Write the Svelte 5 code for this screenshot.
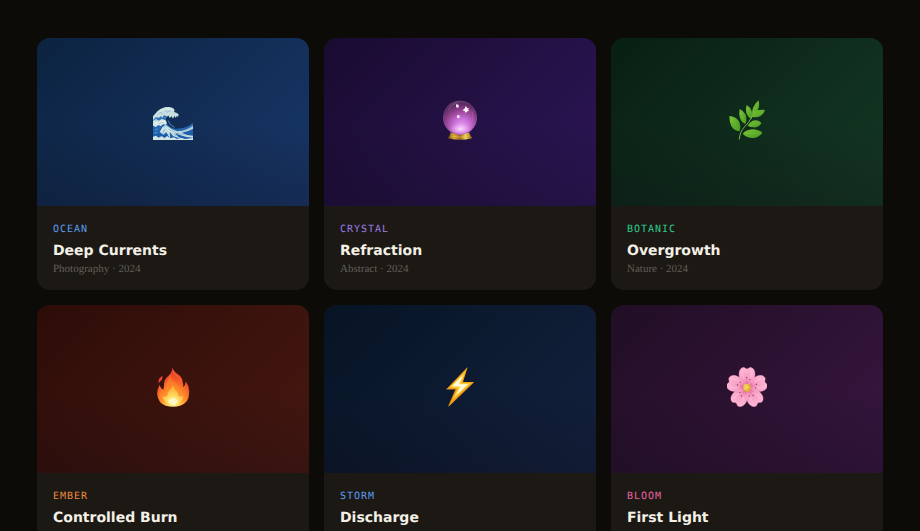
<script lang="ts">
	type Card = {
		id: string;
		category: string;
		title: string;
		meta?: string;
	};

	const cards: Card[] = [
		{ id: 'ocean', category: 'Ocean', title: 'Deep Currents', meta: 'Photography · 2024' },
		{ id: 'crystal', category: 'Crystal', title: 'Refraction', meta: 'Abstract · 2024' },
		{ id: 'botanic', category: 'Botanic', title: 'Overgrowth', meta: 'Nature · 2024' },
		{ id: 'ember', category: 'Ember', title: 'Controlled Burn' },
		{ id: 'storm', category: 'Storm', title: 'Discharge' },
		{ id: 'bloom', category: 'Bloom', title: 'First Light' }
	];

	const petals = [0, 72, 144, 216, 288];
</script>

{#snippet ocean()}
	<defs>
		<linearGradient id="sea" x1="0" y1="0" x2="0" y2="1">
			<stop offset="0" stop-color="#3f7fb8" />
			<stop offset="1" stop-color="#1556ab" />
		</linearGradient>
	</defs>
	<path fill="url(#sea)" d="M0 48 Q14 36 30 30 L48 46 Q36 54 39 66 Q46 82 66 86 Q98 88 120 69 V121 H0Z" />
	<path
		fill="#c6dedf"
		d="M0 49 L8 40 L13 34 L22 27 L29 24 L38 21 L50 21 L60 24 L65 30 L63 36 L70 38 L77 43 L75 51 L71 47 L69 54 L64 48 L60 56 L56 49 L50 54 L47 47 L40 49 L33 45 L28 53 L24 48 L18 53 L9 52 L0 60Z"
	/>
	<path
		fill="#d5e8e6"
		d="M0 63 L9 57 L18 62 L26 57 L38 61 L42 69 L37 75 L31 72 L24 78 L16 75 L9 81 L0 77Z"
	/>
	<path
		fill="#c4dde0"
		d="M20 96 L28 82 L38 74 L44 79 L57 88 L73 94 Q101 91 120 77 V86 Q101 96 86 98 L104 105 L120 107 V113 L100 111 L78 104 L64 100 L84 117 L60 108 L50 95 L52 118 L40 97 L31 104Z"
	/>
	<path
		fill="#d5e5e3"
		d="M0 110 L9 107 L17 113 L26 108 L34 114 L43 108 L51 115 L63 112 L72 117 L83 113 L97 117 L120 114 V121 H0Z"
	/>
	<path
		fill="none"
		stroke="#3b77ab"
		stroke-width="1"
		d="M1 69 L10 61 L19 69 L31 66 M11 45 L21 36 L29 42 M34 29 L42 37 L54 31 M37 79 L30 101 M48 87 L68 108 M56 91 L94 113 M69 100 L113 105 M84 94 Q104 90 119 81"
	/>
	<path fill="none" stroke="#f4fbf6" stroke-width="2" d="M7 47 L25 31 L44 26 L57 30 M3 67 L18 67 L33 64 M25 92 L37 83 L49 94 L67 100" />
	<path fill="none" stroke="#75aed1" stroke-width="2" d="M6 90 L15 87 M3 100 L14 97 M45 61 Q50 77 65 82" />
{/snippet}

{#snippet crystal()}
	<defs>
		<radialGradient id="orb" cx="0.55" cy="0.76" r="0.78">
			<stop offset="0" stop-color="#e7a2ed" />
			<stop offset="0.3" stop-color="#c970d8" />
			<stop offset="0.62" stop-color="#93408f" />
			<stop offset="0.85" stop-color="#5d2c60" />
			<stop offset="1" stop-color="#5f4069" />
		</radialGradient>
		<linearGradient id="stand">
			<stop offset="0" stop-color="#765017" />
			<stop offset="0.25" stop-color="#d9a535" />
			<stop offset="0.5" stop-color="#9b681b" />
			<stop offset="0.72" stop-color="#efd354" />
			<stop offset="1" stop-color="#805719" />
		</linearGradient>
		<radialGradient id="orbLight">
			<stop offset="0" stop-color="#ffe3ff" stop-opacity="0.9" />
			<stop offset="1" stop-color="#eaa1f4" stop-opacity="0" />
		</radialGradient>
	</defs>
	<path fill="url(#stand)" d="M31 98 H88 L91 106 L97 115 Q60 124 24 115 L29 106Z" />
	<circle cx="60" cy="53" r="51" fill="url(#orb)" />
	<ellipse cx="61" cy="87" rx="36" ry="19" fill="url(#orbLight)" />
	<circle cx="60" cy="53" r="50" fill="none" stroke="#79508a" stroke-opacity="0.5" stroke-width="2" />
	<path fill="none" stroke="#c282c7" stroke-opacity="0.35" stroke-width="3" d="M24 31 Q33 13 53 7 M96 33 Q103 52 94 73" />
	<path fill="#fff2ff" d="M78 17 L81 25 L87 24 L84 29 L88 33 L82 34 L77 39 L74 33 L67 31 L73 27Z" />
	<path fill="#ffe5ff" d="M48 13 L56 14 L56 23 L48 22Z M51 46 L59 46 L58 55 L51 54Z" />
	<path fill="none" stroke="#e8c35b" stroke-width="2" d="M33 108 Q60 115 87 108" />
{/snippet}

{#snippet botanic()}
	<defs>
		<linearGradient id="leaf" x1="0" y1="0" x2="1" y2="1">
			<stop offset="0" stop-color="#7bc634" />
			<stop offset="1" stop-color="#459822" />
		</linearGradient>
	</defs>
	<g fill="url(#leaf)">
		<path d="M7 48 Q26 50 35 63 Q43 76 38 94 Q20 92 13 78 Q7 66 7 48Z" />
		<path d="M38 27 Q51 33 56 44 Q61 61 55 72 Q43 67 39 54 Q35 41 38 27Z" />
		<path d="M59 15 Q70 21 75 35 Q79 48 73 57 Q62 51 58 39 Q55 27 59 15Z" />
		<path d="M95 1 Q99 17 93 30 Q88 41 78 47 Q73 34 78 23 Q84 9 95 1Z" />
		<path d="M114 30 Q94 27 83 36 Q76 43 75 51 Q91 54 101 48 Q110 42 114 30Z" />
		<path d="M62 77 Q70 63 84 61 Q99 61 103 70 Q95 84 80 82 Q70 82 62 77Z" />
		<path d="M47 101 Q58 89 76 88 Q95 88 106 99 Q94 114 77 114 Q60 114 47 101Z" />
	</g>
	<path
		fill="none"
		stroke="#79b646"
		stroke-width="3"
		stroke-linecap="round"
		d="M37 117 Q38 96 53 80 Q64 69 71 57 Q78 48 80 31"
	/>
	<path
		fill="none"
		stroke="#9ad84c"
		stroke-opacity="0.6"
		stroke-width="1"
		d="M11 53 L36 90 M41 34 L54 67 M60 22 L73 53 M92 8 L80 42 M107 35 L77 50 M99 70 L66 77 M101 100 L52 101"
	/>
{/snippet}

{#snippet ember()}
	<defs>
		<radialGradient id="flame" cx="0.5" cy="0.94" r="0.92">
			<stop offset="0" stop-color="#fff6a0" />
			<stop offset="0.2" stop-color="#ffd34c" />
			<stop offset="0.42" stop-color="#ff8c28" />
			<stop offset="0.7" stop-color="#f45427" />
			<stop offset="1" stop-color="#df3825" />
		</radialGradient>
		<radialGradient id="core" cx="0.5" cy="0.82" r="0.65">
			<stop offset="0" stop-color="#fffde0" />
			<stop offset="0.35" stop-color="#fff37a" />
			<stop offset="1" stop-color="#ffc13a" />
		</radialGradient>
	</defs>
	<path
		fill="url(#flame)"
		d="M58 0 Q61 13 75 22 Q88 31 89 45 Q92 53 90 61 Q99 55 98 43 Q111 60 108 79 Q109 108 81 116 Q62 122 38 116 Q15 107 13 83 Q11 69 20 53 Q22 64 31 68 L33 55 Q32 39 45 28 Q58 17 58 0Z"
	/>
	<path fill="#eb452c" d="M28 26 Q30 37 22 43 L17 49 Q14 39 20 33Z" />
	<path
		fill="#ff8a2c"
		fill-opacity="0.5"
		d="M52 24 Q54 37 65 45 Q76 53 77 65 Q78 75 86 77 Q95 75 98 68 Q99 99 78 110 Q60 119 39 110 Q20 101 20 75 Q31 83 40 76 Q36 62 40 49 Q46 36 52 24Z"
	/>
	<path
		fill="url(#core)"
		fill-opacity="0.75"
		d="M60 53 Q61 65 70 72 Q77 78 76 88 Q85 91 91 86 Q89 105 75 112 Q60 118 44 112 Q31 104 29 88 Q38 93 44 85 Q43 76 50 69 Q58 62 60 53Z"
	/>
	<ellipse cx="60" cy="103" rx="14" ry="11" fill="#fffbd2" fill-opacity="0.75" />
	<path fill="none" stroke="#ff7448" stroke-width="2" d="M59 10 Q61 20 73 27 Q84 33 85 47" />
{/snippet}

{#snippet storm()}
	<path fill="#f5a51c" d="M83 0 L19 67 L47 67 L25 119 L102 45 L69 45Z" />
	<path fill="#ffd64a" d="M76 14 L29 62 L55 62 L39 96 L92 49 L62 49Z" />
	<path fill="#fffbe1" d="M69 24 L36 58 L62 58 L49 84 L84 52 L57 52Z" />
	<path fill="none" stroke="#db850b" stroke-width="2" d="M20 66 L48 66 L26 116 M101 46 L27 117" />
{/snippet}

{#snippet bloom()}
	<defs>
		<radialGradient id="petal" cx="0.5" cy="0.95" r="0.9">
			<stop offset="0" stop-color="#d95b91" />
			<stop offset="0.35" stop-color="#f497c0" />
			<stop offset="1" stop-color="#ffb4d4" />
		</radialGradient>
	</defs>
	{#each petals as angle (angle)}
		<g transform={`rotate(${angle} 60 62)`}>
			<path
				fill="url(#petal)"
				stroke="#f494bd"
				stroke-width="1"
				d="M60 62 Q38 49 36 24 Q35 4 50 1 L60 6 L70 1 Q85 4 84 24 Q82 49 60 62Z"
			/>
			<path fill="none" stroke="#ffc9df" stroke-width="2" d="M48 12 Q45 25 51 34 M72 12 Q75 25 69 34" />
			<path fill="none" stroke="#d5578c" stroke-width="1" d="M60 60 V36 M59 55 L52 42" />
			<circle cx="59" cy="32" r="2" fill="#8c2959" />
			<circle cx="69" cy="38" r="2" fill="#a63a6d" />
		</g>
	{/each}
	<circle cx="60" cy="62" r="12" fill="#e6ac35" />
	<circle cx="58" cy="60" r="8" fill="#f6d665" />
	<path fill="none" stroke="#ad7820" stroke-width="1" d="M51 62 L57 57 M60 54 L64 60 M60 65 L67 66" />
{/snippet}

<main class="gallery">
	{#each cards as card (card.id)}
		<article class="card {card.id}">
			<div class="artwork">
				<svg viewBox="0 0 120 120" aria-hidden="true">
					{#if card.id === 'ocean'}
						{@render ocean()}
					{:else if card.id === 'crystal'}
						{@render crystal()}
					{:else if card.id === 'botanic'}
						{@render botanic()}
					{:else if card.id === 'ember'}
						{@render ember()}
					{:else if card.id === 'storm'}
						{@render storm()}
					{:else}
						{@render bloom()}
					{/if}
				</svg>
			</div>
			<div class="details">
				<p class="category">{card.category}</p>
				<h2>{card.title}</h2>
				{#if card.meta}
					<p class="meta">{card.meta}</p>
				{/if}
			</div>
		</article>
	{/each}
</main>

<style>
	:global(body) {
		margin: 0;
		background: #0c0b07;
	}

	.gallery {
		display: grid;
		grid-template-columns: repeat(3, minmax(0, 1fr));
		gap: 15px;
		padding: 38px 37px;
		text-rendering: geometricPrecision;
	}

	.card {
		overflow: hidden;
		border-radius: 13px;
		background: #1c1914;
	}

	.artwork {
		display: flex;
		align-items: center;
		justify-content: center;
		box-sizing: border-box;
		height: 168px;
		padding-bottom: 4px;
		background:
			linear-gradient(to top, rgba(10, 7, 14, 0.25), transparent 50%),
			linear-gradient(135deg, var(--from), var(--to));
	}

	.artwork svg {
		width: 40px;
		height: 40px;
	}

	.details {
		padding: 17px 16px 14px;
	}

	.category,
	.meta,
	h2 {
		margin: 0;
	}

	.category {
		color: var(--accent);
		font: 10px/14px 'DejaVu Sans Mono', monospace;
		letter-spacing: 1px;
		text-transform: uppercase;
	}

	h2 {
		margin: 5px 0 2px;
		color: #f4f0e6;
		font: 700 14px/18px 'DejaVu Sans', sans-serif;
	}

	.meta {
		color: #625f59;
		font: 11px/14px 'Liberation Serif', serif;
	}

	.ocean {
		--from: #0c2340;
		--to: #18376a;
		--accent: #5b9cf0;
	}

	.crystal {
		--from: #190b30;
		--to: #2d1658;
		--accent: #9b7be8;
	}

	.botanic {
		--from: #081f13;
		--to: #153825;
		--accent: #2fcb8c;
	}

	.ember {
		--from: #2d0c08;
		--to: #481811;
		--accent: #ee8a3c;
	}

	.storm {
		--from: #071424;
		--to: #13213f;
		--accent: #5b9cf0;
	}

	.bloom {
		--from: #210e25;
		--to: #381640;
		--accent: #e865a5;
	}
</style>
